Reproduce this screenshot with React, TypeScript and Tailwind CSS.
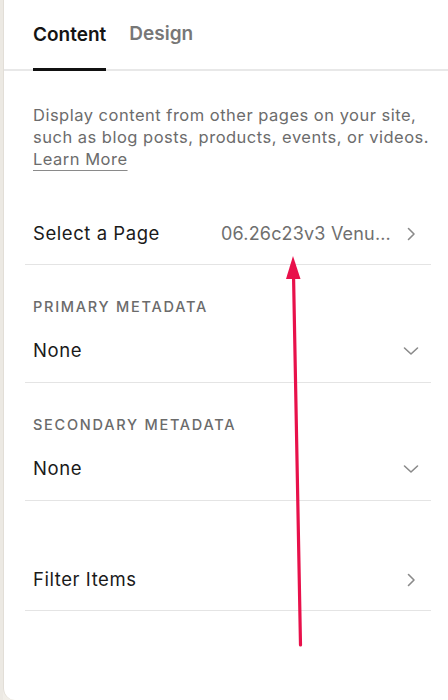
import React from 'react';

const font = { fontFamily: 'Inter, "Noto Sans", sans-serif' };

function ChevronRight() {
  return (
    <svg width="12" height="16" viewBox="0 0 12 16" fill="none" className="shrink-0">
      <path d="M3.5 2.5 L9 8 L3.5 13.5" stroke="#8a8a8a" strokeWidth="1.6" strokeLinecap="round" strokeLinejoin="round" />
    </svg>
  );
}

function ChevronDown() {
  return (
    <svg width="16" height="10" viewBox="0 0 16 10" fill="none" className="shrink-0">
      <path d="M1.5 2 L8 8 L14.5 2" stroke="#8a8a8a" strokeWidth="1.6" strokeLinecap="round" strokeLinejoin="round" />
    </svg>
  );
}

function MetaSelect({ label, value }: { label: string; value: string }) {
  return (
    <div className="pt-[32px] border-b border-[#e4e4e4]">
      <div className="pl-2 text-[14.5px] leading-[20px] font-medium tracking-[0.12em] text-[#6b6b6b] uppercase">{label}</div>
      <div className="mt-[3px] h-[62px] flex items-center justify-between pl-2 pr-[12px]">
        <span className="text-[18.5px] tracking-[0.03em] text-[#1a1a1a]">{value}</span>
        <ChevronDown />
      </div>
    </div>
  );
}

export default function App() {
  return (
    <div className="relative w-[448px] h-[700px] bg-[#f1eee8] flex overflow-hidden" style={font}>
      <div className="w-[3px] shrink-0 bg-[#ece9e3]" />
      <div className="flex-1 bg-white rounded-bl-[12px] border-l border-[#e2ded7]">
        {/* tabs */}
        <div className="h-[71px] border-b-2 border-[#e8e8e8] flex items-end pl-[29px] gap-[23px]">
          <div className="flex flex-col">
            <span className="text-[19px] font-semibold text-[#141414] leading-[24px] mb-[21px]">Content</span>
            <div className="h-[3px] bg-[#111] -mb-[2px]" />
          </div>
          <span className="text-[19px] font-semibold text-[#777] leading-[24px] mb-[23px]">Design</span>
        </div>

        <div className="pl-[29px] pt-[33px] text-[16.5px] tracking-[0.03em] leading-[22px] text-[#6c6c6c] whitespace-nowrap">
          <p>
            Display content from other pages on your site,
            <br />
            such as blog posts, products, events, or videos.
            <br />
            <span className="underline underline-offset-[5px] decoration-[#8a8a8a]">Learn More</span>
          </p>
        </div>

        <div className="ml-[21px] mr-[17px] mt-[33px]">
          <div className="h-[62px] flex items-center justify-between pl-2 pr-[14px] border-b border-[#e4e4e4]">
            <span className="text-[18.5px] tracking-[0.03em] text-[#1a1a1a]">Select a Page</span>
            <div className="flex items-center gap-[14px]">
              <span className="text-[18px] tracking-[0.01em] text-[#6f6f6f]">06.26c23v3 Venu...</span>
              <ChevronRight />
            </div>
          </div>

          <MetaSelect label="Primary Metadata" value="None" />
          <MetaSelect label="Secondary Metadata" value="None" />

          <div className="mt-[48px] h-[62px] flex items-center justify-between pl-2 pr-[14px] border-b border-[#e4e4e4]">
            <span className="text-[18.5px] tracking-[0.03em] text-[#1a1a1a]">Filter Items</span>
            <ChevronRight />
          </div>
        </div>
      </div>

      {/* annotation arrow */}
      <svg className="absolute left-0 top-0 pointer-events-none" width="448" height="700" viewBox="0 0 448 700">
        <line x1="300.5" y1="645" x2="293.5" y2="274" stroke="#e8114b" strokeWidth="3.2" strokeLinecap="round" />
        <polygon points="293,256 286,279 300.5,279" fill="#e8114b" />
      </svg>
    </div>
  );
}
